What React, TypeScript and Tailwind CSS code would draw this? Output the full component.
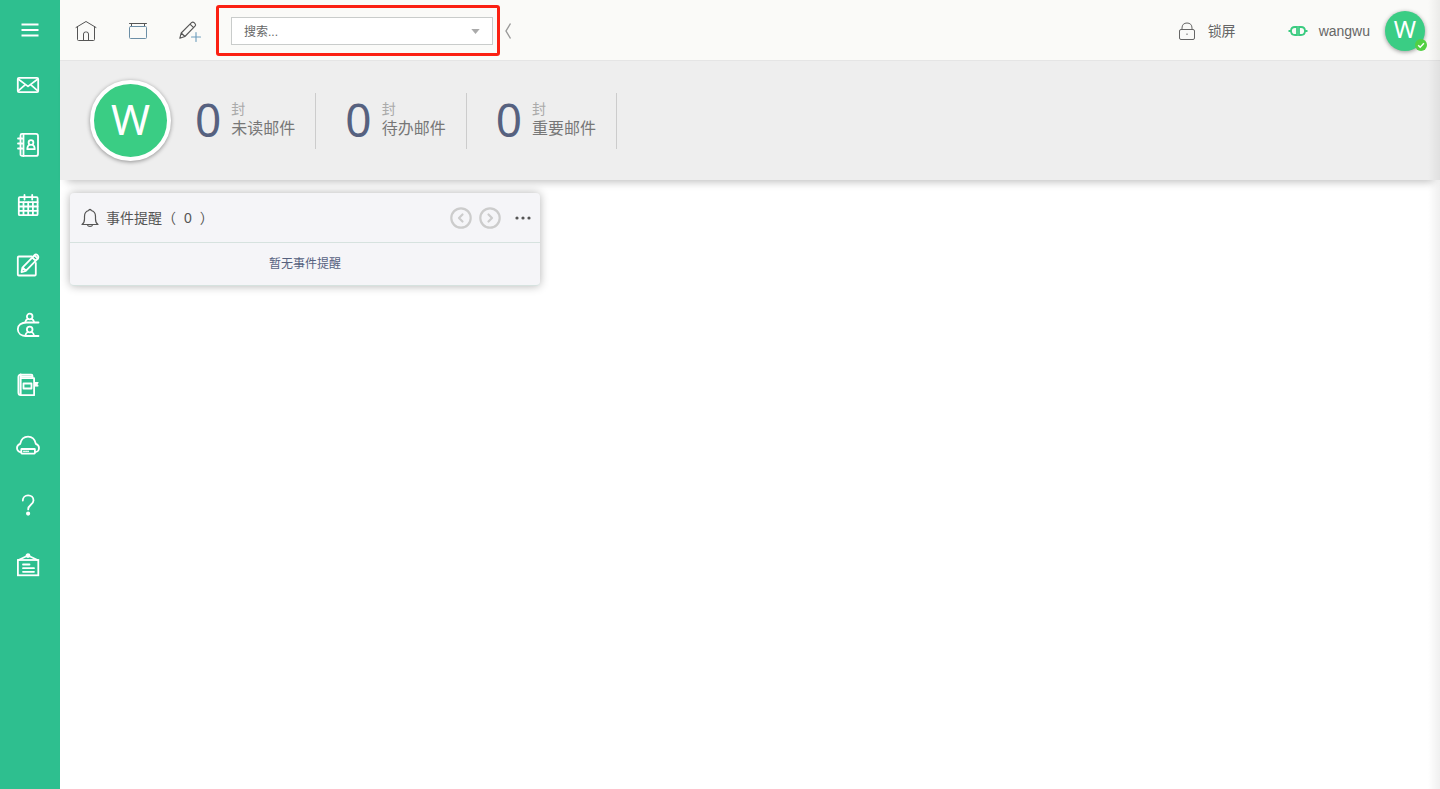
import { useState } from 'react';
import type { ReactNode } from 'react';

type IconProps = { children: ReactNode; className?: string; strokeWidth?: number };

const Icon = ({ children, className = 'size-6', strokeWidth = 1.8 }: IconProps) => (
  <svg
    viewBox="0 0 24 24"
    className={className}
    fill="none"
    stroke="currentColor"
    strokeWidth={strokeWidth}
    strokeLinecap="round"
    strokeLinejoin="round"
    aria-hidden="true"
  >
    {children}
  </svg>
);

// Sidebar entries
const navItems = [
  {
    id: 'mail',
    label: '邮件',
    icon: (
      <>
        <rect x="1.8" y="4.8" width="20.4" height="14.4" rx="1.2" />
        <path d="M2.5 6.2l6.8 5.2 2.7 2 2.7-2 6.8-5.2M2.5 17.6l6-5.2M21.5 17.6l-6-5.2" />
      </>
    ),
  },
  {
    id: 'contacts',
    label: '通讯录',
    icon: (
      <>
        <path d="M6 .9h14a2 2 0 0 1 2 2v18a2 2 0 0 1-2 2H6a1.5 1.5 0 0 1-1.5-1.5v-19A1.5 1.5 0 0 1 6 .9z" />
        <path d="M7.5 1v22M2 5.5h4M2 10.5h4M2 15.5h4" />
        <circle cx="15" cy="9.5" r="2.4" />
        <path d="M13.5 11.8c-1.6.8-2.2 2-2.2 4.4h7.4c0-2.4-.6-3.600-2.2-4.400" />
      </>
    ),
  },
  {
    id: 'calendar',
    label: '日历',
    icon: (
      <>
        <rect x="2.8" y="4.2" width="18.8" height="18" rx="1" />
        <path d="M3 9.2h18.5M3 13.5h18.5M3 17.8h18.5M7.500 9v13M12.200 9v13M16.900 9v13M8.500 2v4.500M16.200 2v4.500" />
      </>
    ),
  },
  {
    id: 'compose',
    label: '写邮件',
    icon: (
      <>
        <path d="M16 3.500H2.800a1 1 0 0 0-1 1v17a1 1 0 0 0 1 1h16a1 1 0 0 0 1-1V10" />
        <path d="M18.400 2.400l3.400 3.200-12 12.200-4.300 1.300.9-4.500zM16.300 4.500l3.400 3.300M6.600 14.500l3.300 3.200" />
        <path d="M18.400 2.400c1-1.200 2-1.200 3-.2s1.300 2.200.4 3.400" />
      </>
    ),
  },
  {
    id: 'groups',
    label: '群组',
    icon: (
      <>
        <path d="M22.500 9.500H10.500c-5 0-8.700 2.500-8.700 6.700s3.700 6.800 8.700 6.800h12" />
        <circle cx="13.700" cy="3.500" r="2.800" />
        <path d="M11.900 5.900c-1.800.6-2.400 1.800-2.600 3.300M15.500 5.900c1.800.6 2.400 1.800 2.600 3.300" />
        <circle cx="13.700" cy="16.500" r="2.800" />
        <path d="M11.900 19c-1.800.7-2.400 2-2.600 3.800M15.500 19c1.800.7 2.400 2 2.600 3.800" />
      </>
    ),
  },
  {
    id: 'notebook',
    label: '记事本',
    icon: (
      <>
        <path d="M16.500 4.500V3c0-.9-.4-1.400-1.200-1.400H4.600C3.200 1.600 2.400 2.500 2.400 4v15.500c0 1.700.9 2.700 2.500 2.700h13.200V5.200H5.300" />
        <path d="M4.600 1.600v20M4.500 3.400h11.600" strokeWidth="2" />
        <rect x="7.500" y="10.500" width="8" height="5" />
        <path d="M19 9.500h3.200l-1 1.800 1 1.800H19z" fill="currentColor" strokeWidth="1" />
      </>
    ),
  },
  {
    id: 'cloud',
    label: '云盘',
    icon: (
      <>
        <path d="M5 19.200c-2.300 0-4-1.900-4-4.200 0-2.600 1.400-3.600 3.200-4.200C5.200 6.300 8 3.700 12 3.700s6.800 2.600 7.800 7.100c1.800.6 3.200 1.800 3.200 4.200s-1.700 4.200-4 4.200" />
        <rect x="5.300" y="16" width="13.600" height="4.600" rx=".5" />
        <path d="M8 18.300h.1M10 18.300h.1M12 18.300h.1" />
      </>
    ),
  },
  {
    id: 'help',
    label: '帮助',
    icon: (
      <>
        <path d="M6.800 7.600c0-3.200 2.200-5.200 5.300-5.200 3.200 0 5.400 2 5.400 5 0 4-5.300 4.700-5.300 8.600v.4" />
        <circle cx="12.100" cy="20.600" r="1.200" fill="currentColor" />
      </>
    ),
  },
  {
    id: 'notice',
    label: '公告',
    icon: (
      <>
        <rect x="1.900" y="7" width="20.400" height="15.300" strokeLinejoin="miter" />
        <path d="M2.500 7L12 2.500 21.500 7M7 11.500h6.500M7 15.200h11M7 18.800h11" />
        <circle cx="12" cy="2.600" r="1.500" fill="currentColor" />
      </>
    ),
  },
];

const stats = [
  { id: 'unread', count: 0, label: '未读邮件' },
  { id: 'todo', count: 0, label: '待办邮件' },
  { id: 'important', count: 0, label: '重要邮件' },
];

const Sidebar = () => (
  <nav className="w-15 shrink-0 bg-[#2ebf8f] text-white">
    <button type="button" aria-label="菜单" className="flex h-[55px] w-full items-center justify-center pt-1">
      <Icon>
        <path d="M3.500 6.500h17M3.500 12h17M3.500 17.500h17" strokeLinecap="butt" />
      </Icon>
    </button>
    {navItems.map((item) => (
      <a key={item.id} href={`#${item.id}`} aria-label={item.label} className="flex h-15 items-center justify-center pr-1">
        <Icon className="size-6 overflow-visible">{item.icon}</Icon>
      </a>
    ))}
  </nav>
);

const TopBar = () => {
  const [keyword, setKeyword] = useState('');

  return (
    <header className="flex h-15 items-center bg-[#fafaf8] pt-px text-[#666]">
      <button type="button" aria-label="首页" className="flex w-13 justify-center text-[#555]">
        <Icon strokeWidth={1}>
          <path d="M2 8.500l10-6 10 6M3.500 8v12.500a1 1 0 0 0 1 1h15a1 1 0 0 0 1-1V8" />
          <path d="M9.500 21.500v-6.500a2 2 0 0 1 2-2h1a2 2 0 0 1 2 2v6.500" />
        </Icon>
      </button>
      <button type="button" aria-label="窗口" className="flex w-13 justify-center text-[#555]">
        <Icon strokeWidth={1}>
          <path d="M3.500 4.500h17M5.500 4.500v3M18.500 4.500v3" />
          <rect x="3.500" y="7.500" width="17" height="12" rx="1" stroke="#6b8ea6" />
        </Icon>
      </button>
      <button type="button" aria-label="新建" className="flex w-13 justify-center text-[#555]">
        <Icon strokeWidth={1.1}>
          <path d="M1.800 19.300l1.400-5.300L13.500 3.700c.8-.8 1.800-.8 2.600 0l.9.900c.8.8.8 1.800 0 2.600L6.900 17.500zM3.200 14l3.700 3.500M12 5.200l3.600 3.500" />
          <path d="M18 13.500v9M13.500 18h9" stroke="#6b9cbc" />
        </Icon>
      </button>

      <div className="h-[51px] w-71 rounded-[3px] border-3 border-[#fb2012] py-[9px] pr-1 pl-3">
        <div className="flex h-7 items-center border border-[#c9cccb] bg-white">
          <input
            type="text"
            aria-label="搜索"
            placeholder="搜索..."
            value={keyword}
            onChange={(e) => setKeyword(e.target.value)}
            className="min-w-0 flex-1 pt-px pl-3 text-xs text-[#555] outline-none placeholder:text-[#666]"
          />
          <button type="button" aria-label="搜索选项" className="pr-3 pl-2">
            <svg viewBox="0 0 10 6" className="h-[5px] w-[9px]" fill="#aaa" aria-hidden="true">
              <path d="M0 0h10L5 6z" />
            </svg>
          </button>
        </div>
      </div>
      <button type="button" aria-label="收起" className="px-1 text-[#999]">
        <svg viewBox="0 0 8 18" className="h-[18px] w-2" fill="none" stroke="currentColor" strokeWidth="1.4" aria-hidden="true">
          <path d="M6.500 1.500L2 9l4.500 7.500" />
        </svg>
      </button>

      <div className="ml-auto flex items-center pr-[15px] text-sm">
        <button type="button" className="flex items-center gap-3">
          <svg viewBox="0 0 18 20" className="h-5 w-[18px]" fill="none" stroke="currentColor" aria-hidden="true">
            <rect x="1.500" y="8.500" width="15" height="10" rx="1.500" />
            <path d="M4 8.500V7c0-3.300 2-5 5-5s5 1.700 5 5v1.500M9 12.500v1.500" />
          </svg>
          锁屏
        </button>
        <button type="button" className="ml-13 flex items-center gap-[11px]">
          <svg viewBox="0 0 20 12" className="h-3 w-5" fill="none" stroke="#3acb80" strokeWidth="1.800" aria-hidden="true">
            <path d="M9 2H7C4.500 2 3 3.700 3 6s1.500 4 4 4h2zM11 2h2c2.500 0 4 1.700 4 4s-1.500 4-4 4h-2z" />
            <path d="M.500 6H3M17 6h2.500" />
          </svg>
          wangwu
        </button>
        <div className="relative ml-[15px] flex size-10 items-center justify-center rounded-full bg-[#3acd84] text-2xl leading-none text-white shadow-[0_1px_4px_rgba(0,0,0,0.4)] [font-family:'Noto_Sans',sans-serif]">
          <span className="pb-1">W</span>
          <svg viewBox="0 0 12 12" className="absolute -right-[2px] bottom-0 size-3" aria-hidden="true">
            <circle cx="6" cy="6" r="6" fill="#52d043" />
            <path d="M3.200 6.200l2 2 3.700-3.900" fill="none" stroke="#fff" strokeWidth="1.400" />
          </svg>
        </div>
      </div>
    </header>
  );
};

const Summary = () => (
  <section className="flex h-30 items-center border-t border-[#e5e5e5] bg-[#eee] pl-[30px] shadow-[0_9px_8px_-7px_rgba(0,0,0,0.25)]">
    <div className="mr-6 flex size-[81px] items-center justify-center rounded-full border-4 border-white bg-[#3acd84] text-[42px] leading-none text-white shadow-[0_1px_4px_rgba(0,0,0,0.4)] [font-family:'Noto_Sans',sans-serif]">
      <span className="pb-1">W</span>
    </div>
    {stats.map((stat) => (
      <a key={stat.id} href={`#${stat.id}`} className="mr-[29px] flex h-14 items-center gap-[10px] border-r border-[#ccc] pr-5 pb-1">
        <span className="text-[46px] leading-none text-[#56617f] [font-family:'Noto_Sans',sans-serif]">{stat.count}</span>
        <span className="flex flex-col">
          <span className="text-sm leading-5 text-[#aaa]">封</span>
          <span className="text-base leading-5 text-[#777]">{stat.label}</span>
        </span>
      </a>
    ))}
  </section>
);

const Reminders = () => (
  <section className="w-full max-w-[470px] rounded bg-[#f5f5f8] shadow-[0_0_10px_rgba(0,0,0,0.3)]">
    <div className="flex h-[50px] items-center border-b border-[#d6e2df] px-2 text-[#555]">
      <Icon strokeWidth={1.2}>
        <path d="M4 18.500c2-1.200 2.500-2.800 2.500-5.500v-2.500c0-3.300 1.800-5.500 4.300-6 0-1.500 2.400-1.500 2.400 0 2.500.500 4.300 2.700 4.300 6V13c0 2.700.5 4.300 2.500 5.500zM9.500 18.800c.5 2.200 4.500 2.200 5 0" />
      </Icon>
      <h2 className="ml-1 text-sm">
        事件提醒（<span className="mx-2">0</span>）
      </h2>
      <div className="ml-auto flex items-center text-[#ccc]">
        <button type="button" aria-label="上一个" className="mr-[5px]">
          <Icon strokeWidth={2.2}>
            <circle cx="12" cy="12" r="9.700" />
            <path d="M13.500 8.500L10 12l3.500 3.500" />
          </Icon>
        </button>
        <button type="button" aria-label="下一个">
          <Icon strokeWidth={2.2}>
            <circle cx="12" cy="12" r="9.700" />
            <path d="M10.500 8.500L14 12l-3.500 3.500" />
          </Icon>
        </button>
        <button type="button" aria-label="更多" className="ml-3 text-[#555]">
          <svg viewBox="0 0 18 4" className="h-1 w-[18px]" fill="currentColor" aria-hidden="true">
            <circle cx="3" cy="2" r="1.600" />
            <circle cx="9" cy="2" r="1.600" />
            <circle cx="15" cy="2" r="1.600" />
          </svg>
        </button>
      </div>
    </div>
    <p className="flex h-[43px] items-center justify-center rounded-b border-b border-[#d6e2df] text-xs text-[#56617f]">暂无事件提醒</p>
  </section>
);

const App = () => (
  <div className="relative flex min-h-screen bg-white [font-family:'Liberation_Sans','Noto_Sans_CJK_SC',sans-serif]">
    <Sidebar />
    <div className="min-w-0 flex-1">
      <TopBar />
      <Summary />
      <main className="px-[10px] pt-[13px]">
        <Reminders />
      </main>
    </div>
    {/* Edge shade of the collapsed side panel */}
    <div className="pointer-events-none absolute inset-y-0 right-0 w-3 bg-gradient-to-l from-black/6 to-transparent"></div>
  </div>
);

export default App;
